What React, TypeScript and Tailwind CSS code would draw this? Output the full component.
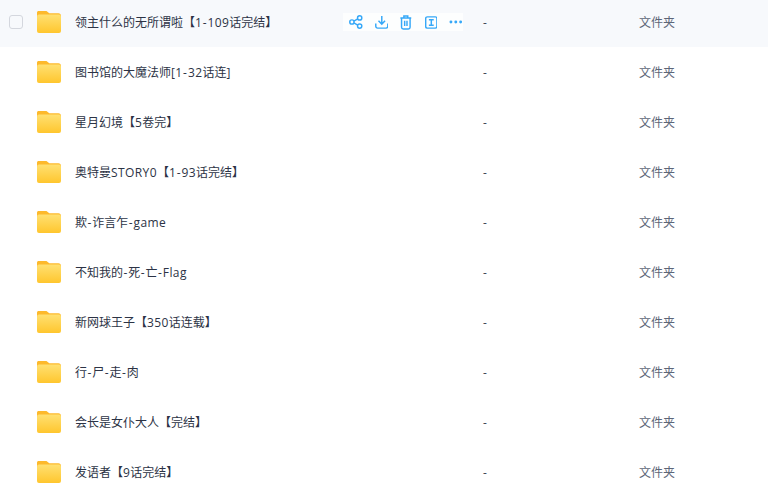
import React from 'react';

const rows = [
  '领主什么的无所谓啦【1-109话完结】',
  '图书馆的大魔法师[1-32话连]',
  '星月幻境【5卷完】',
  '奥特曼STORY0【1-93话完结】',
  '欺-诈言乍-game',
  '不知我的-死-亡-Flag',
  '新网球王子【350话连载】',
  '行-尸-走-肉',
  '会长是女仆大人【完结】',
  '发语者【9话完结】',
];

// latin runs sit a little wider in the original font
const FileName = ({ name }: { name: string }) => (
  <>
    {name.split(/([\x21-\x7e]+)/).map((run, i) =>
      i % 2 === 0 ? (
        run
      ) : (
        <span key={i} className="tracking-[0.4px]">
          {run.split(/(-)/).map((part, j) =>
            part === '-' ? (
              <span key={j} className="mx-[0.5px]">-</span>
            ) : (
              part
            ),
          )}
        </span>
      ),
    )}
  </>
);

const FolderIcon = () => (
  <svg width="24" height="22" viewBox="0 0 24 22" className="shrink-0">
    <defs>
      <linearGradient id="folderBody" x1="0" y1="0" x2="0" y2="1">
        <stop offset="0" stopColor="#ffe071" />
        <stop offset="1" stopColor="#ffc62e" />
      </linearGradient>
    </defs>
    <path d="M1.5 0H8.5C9.6 0 10.2 .5 11 1.2L12.3 2.3H21.5C22.9 2.3 24 3.4 24 4.8V8H0V1.5C0 .7 .7 0 1.5 0Z" fill="#fdb92c" />
    <rect x="0" y="3.6" width="24" height="18.4" rx="2" fill="url(#folderBody)" />
  </svg>
);

const Actions = () => (
  <div className="flex items-center h-[18px] w-[120px] pl-[6px] bg-white/80 text-[#36a8f8]">
    <svg width="14" height="14" viewBox="0 0 14 14" fill="none" stroke="currentColor" strokeWidth="1.5">
      <circle cx="3" cy="7" r="2.2" />
      <circle cx="11" cy="2.8" r="2.2" />
      <circle cx="11" cy="11.2" r="2.2" />
      <path d="M5 6 9 3.8M5 8 9 10.2" />
    </svg>
    <svg width="14" height="14" viewBox="0 0 14 14" fill="none" stroke="currentColor" strokeWidth="1.5" className="ml-[12px]">
      <path d="M7 .8V9M3.6 5.8 7 9.2l3.4-3.4" />
      <path d="M.8 8.5v3a1.8 1.8 0 0 0 1.8 1.8h8.8a1.8 1.8 0 0 0 1.8-1.8v-3" />
    </svg>
    <svg width="12" height="15" viewBox="0 0 12 15" fill="none" stroke="currentColor" strokeWidth="1.5" className="ml-[12px]">
      <path d="M.4 2.8h11.2M4 2.4V.9h4v1.5" />
      <path d="M1.6 2.8v9.6a1.8 1.8 0 0 0 1.8 1.8h5.2a1.8 1.8 0 0 0 1.8-1.8V2.8" />
      <path d="M4.8 5.8v5.4M7.2 5.8v5.4" />
    </svg>
    <svg width="13" height="13" viewBox="0 0 13 13" fill="none" stroke="currentColor" strokeWidth="1.5" className="ml-[13px]">
      <rect x=".7" y=".7" width="11.6" height="11.6" rx="1.6" />
      <path d="M4 3.6h5M4 9.4h5M6.5 3.6v5.8" />
    </svg>
    <svg width="14" height="4" viewBox="0 0 14 4" fill="currentColor" className="ml-[12px]">
      <circle cx="2" cy="2" r="1.5" />
      <circle cx="7" cy="2" r="1.5" />
      <circle cx="12" cy="2" r="1.5" />
    </svg>
  </div>
);

const App: React.FC = () => {
  return (
    <div
      className="h-[483px] w-[768px] overflow-hidden bg-white text-[12px]"
      style={{ fontFamily: '"Open Sans", "Noto Sans CJK SC", sans-serif' }}
    >
      <div className="-mt-[3px]">
        {rows.map((name, i) => (
          <div key={name} className={`flex h-[50px] items-center ${i === 0 ? 'bg-[#f7f9fc]' : ''}`}>
            <div className="flex w-[37px] shrink-0 justify-start pl-[9px]">
              {i === 0 && <span className="h-[14px] w-[14px] rounded-[3px] border border-[#d4d7de] bg-[#f7f9fc]" />}
            </div>
            <FolderIcon />
            <div className="ml-[14px] w-[268px] shrink-0 truncate pt-[1px] text-[#2c3345]">
              <FileName name={name} />
            </div>
            <div className="w-[140px] shrink-0">{i === 0 && <Actions />}</div>
            <div className="w-[156px] shrink-0 pt-[1px] text-[#3f4656]">-</div>
            <div className="pt-[1px] text-[#5d6678]">文件夹</div>
          </div>
        ))}
      </div>
    </div>
  );
};

export default App;
